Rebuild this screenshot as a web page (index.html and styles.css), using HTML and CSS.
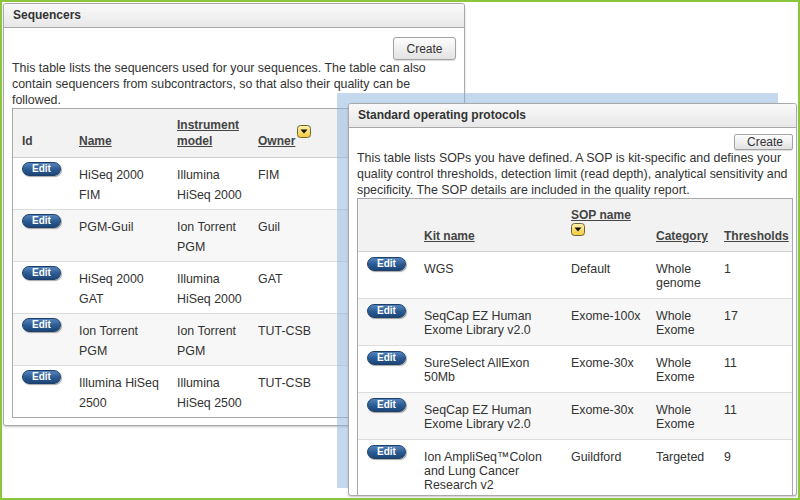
FILE: index.html
```html
<!DOCTYPE html>
<html lang="en">
<head>
<meta charset="utf-8">
<title>Sequencers and SOPs</title>
<link rel="stylesheet" href="styles.css">
</head>
<body>
<div class="screen">

  <section class="panel panel-seq">
    <header class="panel-head">Sequencers</header>
    <div class="panel-body">
      <div class="actions"><button class="btn">Create</button></div>
      <p class="intro">This table lists the sequencers used for your sequences. The table can also contain sequencers from subcontractors, so that also their quality can be followed.</p>
      <table class="grid grid-seq">
        <colgroup>
          <col class="c-id"><col class="c-name"><col class="c-model"><col>
        </colgroup>
        <thead>
          <tr>
            <th>Id</th>
            <th><a href="#">Name</a></th>
            <th><a href="#">Instrument model</a></th>
            <th><a href="#">Owner</a><span class="sort sort-inline"><svg width="14" height="13" viewBox="0 0 14 13"><defs><linearGradient id="sy1" x1="0" y1="0" x2="0" y2="1"><stop offset="0" stop-color="#fff3b0"/><stop offset="1" stop-color="#f4c93a"/></linearGradient></defs><rect x="0.5" y="0.5" width="13" height="12" rx="3" fill="url(#sy1)" stroke="#6a6336"/><path d="M3.5 4.5h7L7 8.5z" fill="#111"/></svg></span></th>
          </tr>
        </thead>
        <tbody>
          <tr><td class="cell-edit"><button class="edit">Edit</button></td><td>HiSeq 2000 FIM</td><td>Illumina HiSeq 2000</td><td>FIM</td></tr>
          <tr><td class="cell-edit"><button class="edit">Edit</button></td><td>PGM-Guil</td><td>Ion Torrent PGM</td><td>Guil</td></tr>
          <tr><td class="cell-edit"><button class="edit">Edit</button></td><td>HiSeq 2000 GAT</td><td>Illumina HiSeq 2000</td><td>GAT</td></tr>
          <tr><td class="cell-edit"><button class="edit">Edit</button></td><td>Ion Torrent PGM</td><td>Ion Torrent PGM</td><td>TUT-CSB</td></tr>
          <tr><td class="cell-edit"><button class="edit">Edit</button></td><td>Illumina HiSeq 2500</td><td>Illumina HiSeq 2500</td><td>TUT-CSB</td></tr>
        </tbody>
      </table>
    </div>
  </section>

  <div class="focus-shade"></div>

  <section class="panel panel-sop">
    <header class="panel-head">Standard operating protocols</header>
    <div class="panel-body">
      <div class="actions"><button class="btn btn-sm">Create</button></div>
      <p class="intro">This table lists SOPs you have defined. A SOP is kit-specific and defines your quality control thresholds, detection limit (read depth), analytical sensitivity and specificity. The SOP details are included in the quality report.</p>
      <table class="grid grid-sop">
        <colgroup>
          <col class="k-edit"><col class="k-kit"><col class="k-sop"><col class="k-cat"><col class="k-thr">
        </colgroup>
        <thead>
          <tr>
            <th></th>
            <th class="kit"><a href="#">Kit name</a></th>
            <th class="sop"><a href="#">SOP name</a><span class="sort sort-block"><svg width="14" height="13" viewBox="0 0 14 13"><defs><linearGradient id="sy2" x1="0" y1="0" x2="0" y2="1"><stop offset="0" stop-color="#fff3b0"/><stop offset="1" stop-color="#f4c93a"/></linearGradient></defs><rect x="0.5" y="0.5" width="13" height="12" rx="3" fill="url(#sy2)" stroke="#6a6336"/><path d="M3.5 4.5h7L7 8.5z" fill="#111"/></svg></span></th>
            <th><a href="#">Category</a></th>
            <th class="thr"><a href="#">Thresholds</a></th>
          </tr>
        </thead>
        <tbody>
          <tr><td class="cell-edit"><button class="edit">Edit</button></td><td class="kit">WGS</td><td class="sop">Default</td><td>Whole genome</td><td class="thr">1</td></tr>
          <tr><td class="cell-edit"><button class="edit">Edit</button></td><td class="kit">SeqCap EZ Human Exome Library v2.0</td><td class="sop">Exome-100x</td><td>Whole Exome</td><td class="thr">17</td></tr>
          <tr><td class="cell-edit"><button class="edit">Edit</button></td><td class="kit">SureSelect AllExon 50Mb</td><td class="sop">Exome-30x</td><td>Whole Exome</td><td class="thr">11</td></tr>
          <tr><td class="cell-edit"><button class="edit">Edit</button></td><td class="kit">SeqCap EZ Human Exome Library v2.0</td><td class="sop">Exome-30x</td><td>Whole Exome</td><td class="thr">11</td></tr>
          <tr><td class="cell-edit"><button class="edit">Edit</button></td><td class="kit">Ion AmpliSeq™Colon and Lung Cancer Research v2</td><td class="sop">Guildford</td><td>Targeted</td><td class="thr">9</td></tr>
        </tbody>
      </table>
    </div>
  </section>

</div>
</body>
</html>
```
FILE: styles.css
```css
html, body {
  margin: 0;
  padding: 0;
  background: #fff;
}

.screen {
  position: relative;
  width: 800px;
  height: 500px;
  box-sizing: border-box;
  border: 2px solid #8cc63f;
  overflow: hidden;
  background: #fff;
  font-family: "Liberation Sans", Arial, sans-serif;
  font-size: 12.4px;
  color: #333;
}

/* floating windows */
.panel {
  position: absolute;
  box-sizing: border-box;
  border: 1px solid #a9a9a9;
  border-radius: 3px;
  background: #fff;
  box-shadow: 0 1px 2px rgba(0, 0, 0, 0.22);
  overflow: hidden;
}

.panel-seq {
  left: 1px;
  top: 1px;
  width: 462px;
  height: 423px;
}

.panel-sop {
  left: 346px;
  top: 101px;
  width: 449px;
  height: 393px;
}

.panel-head {
  height: 23px;
  line-height: 23px;
  padding-left: 9px;
  border-bottom: 1px solid #a9a9a9;
  background: linear-gradient(#f9f9f9, #e8e8e8);
  font-size: 12px;
  font-weight: bold;
  color: #333;
}

.panel-body {
  padding: 9px 8px 8px 8px;
}

.panel-sop .panel-body {
  padding: 6px 3px 8px 8px;
}

.actions {
  display: flex;
  justify-content: flex-end;
}

.btn {
  box-sizing: border-box;
  width: 63px;
  height: 23px;
  padding: 0;
  border: 1px solid #a3a3a3;
  border-radius: 3px;
  background: linear-gradient(#fdfdfd, #e2e2e2);
  box-shadow: 0 1px 1px rgba(0, 0, 0, 0.15);
  font-family: "Liberation Sans", Arial, sans-serif;
  font-size: 12px;
  color: #333;
}

.btn-sm {
  width: 59px;
  height: 16px;
  line-height: 14px;
  border-radius: 2px;
  text-align: right;
  padding-right: 9px;
}

.intro {
  margin: 0;
  line-height: 16px;
}

/* data tables */
.grid {
  width: 100%;
  table-layout: fixed;
  border-collapse: separate;
  border-spacing: 0;
  border: 1px solid #a9a9a9;
}

.grid th {
  text-align: left;
  vertical-align: bottom;
  font-size: 12px;
  font-weight: bold;
  color: #444;
  background: #f2f2f2;
  border-bottom: 1px solid #cfcfcf;
  padding: 8px 5px 8px 9px;
  line-height: 16px;
}

.grid th a {
  color: #444;
  text-decoration: underline;
}

.grid td {
  vertical-align: top;
  padding: 7px 5px 4px 9px;
  line-height: 20px;
  border-top: 1px solid #dcdcdc;
}

.grid tbody tr:first-child td {
  border-top: 0;
}

.grid tbody tr:nth-child(even) td {
  background: #f7f7f7;
}

.grid td.cell-edit {
  padding-top: 4px;
}

.c-id { width: 57px; }
.c-name { width: 98px; }
.c-model { width: 81px; }

.grid-sop th {
  line-height: 14px;
  padding: 9px 5px 8px 9px;
}

.grid-sop td {
  line-height: 14px;
  padding: 10px 5px 8px 9px;
}

.grid-sop td.cell-edit {
  padding-top: 5px;
}

.grid-sop .kit {
  padding-right: 9px;
}

.grid-sop .sop {
  padding-right: 3px;
}

.grid-sop .thr {
  padding-right: 2px;
}

.k-edit { width: 57px; }
.k-kit { width: 147px; }
.k-sop { width: 85px; }
.k-cat { width: 68px; }
.k-thr { width: 77px; }

/* sort toggle */
.sort svg {
  display: block;
}

.sort-inline {
  display: inline-block;
  margin-left: 2px;
  vertical-align: 7px;
}

.sort-block {
  display: block;
  width: 14px;
  margin: 1px 0 7px 0;
}

/* pill edit button */
.edit {
  box-sizing: border-box;
  display: block;
  width: 39px;
  height: 14px;
  padding: 0;
  border: 1px solid #1d406b;
  border-radius: 7px;
  background: linear-gradient(#5483bb, #2a5a92 55%, #1d4677);
  box-shadow: 1px 1px 1px rgba(0, 0, 0, 0.35);
  color: #fff;
  font-family: "Liberation Sans", Arial, sans-serif;
  font-size: 10px;
  font-weight: bold;
  line-height: 12px;
  text-align: center;
}

/* highlight behind the active window */
.focus-shade {
  position: absolute;
  left: 335px;
  top: 91px;
  width: 441px;
  height: 395px;
  background: rgba(140, 180, 222, 0.5);
}
```
